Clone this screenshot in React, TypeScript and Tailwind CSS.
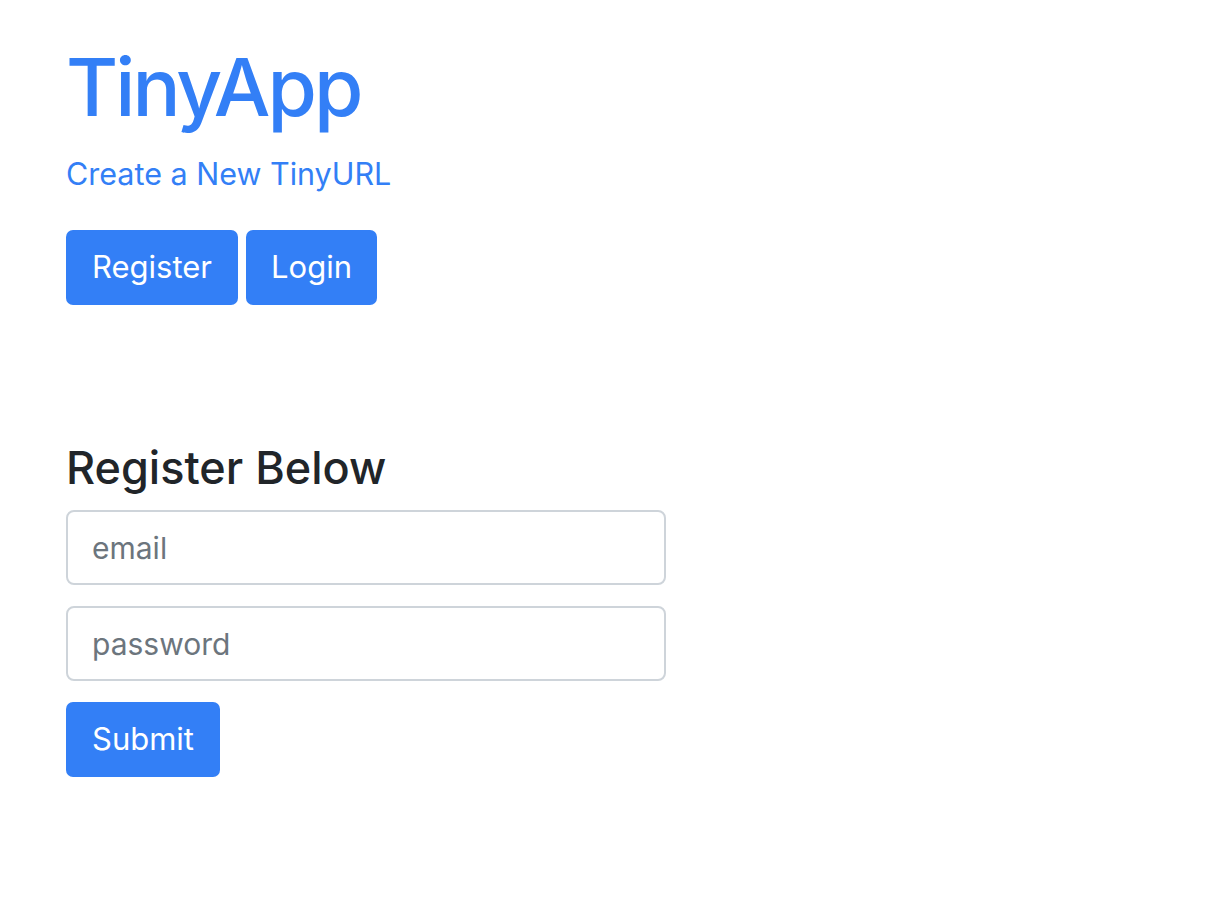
export default function App() {
  return (
    <div
      className="min-h-screen bg-white pl-[66px] pt-[39px]"
      style={{ fontFamily: 'Inter, "Noto Sans", sans-serif' }}
    >
      <h1 className="text-[80px] leading-[96px] font-medium tracking-[-3px] text-[#337ff6] mb-[15px]">
        TinyApp
      </h1>
      <a href="#" className="block text-[30.5px] leading-[48px] text-[#337ff6]">
        Create a New TinyURL
      </a>

      <div className="mt-[32px] flex gap-[8px]">
        <button className="h-[75px] px-[26px] rounded-[7px] bg-[#337ff6] text-white text-[31px]">
          Register
        </button>
        <button className="h-[75px] px-[25px] rounded-[7px] bg-[#337ff6] text-white text-[31px]">
          Login
        </button>
      </div>

      <h2 className="mt-[136px] text-[45px] leading-[53px] font-medium text-[#212529]">
        Register Below
      </h2>

      <form className="mt-[16px] w-[600px] flex flex-col gap-[21px]">
        <input
          type="email"
          placeholder="email"
          className="h-[75px] rounded-[8px] border-2 border-[#ced4da] px-[24px] text-[30px] text-[#495057] placeholder:text-[#6c757d] outline-none"
        />
        <input
          type="password"
          placeholder="password"
          className="h-[75px] rounded-[8px] border-2 border-[#ced4da] px-[24px] text-[30px] text-[#495057] placeholder:text-[#6c757d] outline-none"
        />
      </form>
      <button className="mt-[21px] h-[75px] px-[26px] rounded-[7px] bg-[#337ff6] text-white text-[31px]">
        Submit
      </button>
    </div>
  );
}
